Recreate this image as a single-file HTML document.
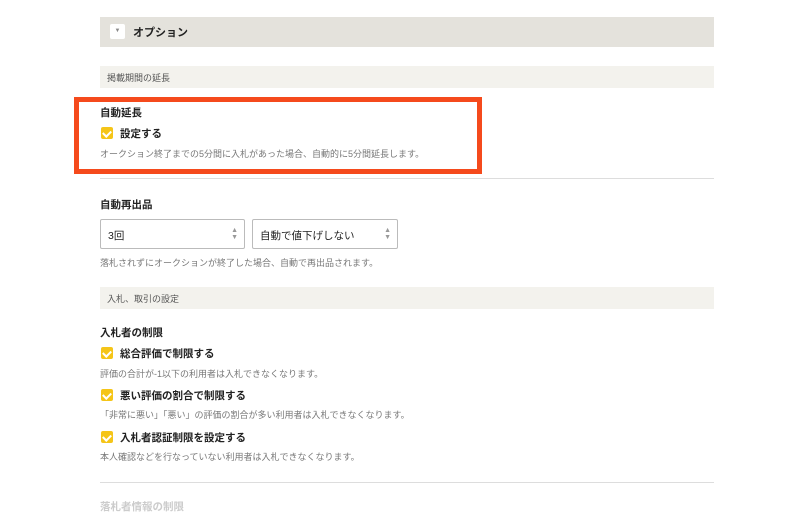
<!DOCTYPE html>
<html><head><meta charset="utf-8"><style>
*{margin:0;padding:0;box-sizing:border-box}
body{width:800px;height:503px;background:#fff;position:relative;overflow:hidden;font-family:"Liberation Sans","Noto Sans CJK JP",sans-serif;color:#333}
.a{position:absolute;white-space:nowrap}
.b{font-weight:bold;font-size:10.5px;color:#222}
.s{font-size:9px;color:#777}
.cb{position:absolute;width:12px;height:12px;background:#f5c518;border-radius:2px}
.cb:after{content:"";position:absolute;left:3px;top:1.5px;width:4px;height:6px;border:solid #fff;border-width:0 2px 2px 0;transform:rotate(45deg)}
.sel{position:absolute;top:219px;height:30px;border:1px solid #bbb;border-radius:2px;font-size:10.5px;padding:8px 0 0 7px;color:#222}
.ar{position:absolute;right:6px;top:7px;font-size:7px;line-height:7px;color:#999}
</style></head><body>
<div class="a" style="left:100px;top:17px;width:614px;height:30px;background:#e4e2dc"></div>
<div class="a" style="left:110px;top:24px;width:15px;height:15px;background:#fff;border-radius:2px;font-size:6px;color:#888;text-align:center;line-height:15px">▼</div>
<div class="a b" style="left:133px;top:24px;font-size:11px">オプション</div>
<div class="a" style="left:100px;top:66px;width:614px;height:22px;background:#f3f2ed"></div>
<div class="a s" style="left:107px;top:71px;color:#555">掲載期間の延長</div>
<div class="a" style="left:74px;top:97px;width:408px;height:77px;border:5px solid #f54a1c"></div>
<div class="a b" style="left:100px;top:105px">自動延長</div>
<div class="cb" style="left:101px;top:127px"></div>
<div class="a b" style="left:120px;top:126px">設定する</div>
<div class="a s" style="left:100px;top:147px">オークション終了までの5分間に入札があった場合、自動的に5分間延長します。</div>
<div class="a" style="left:100px;top:178px;width:614px;height:1px;background:#ddd"></div>
<div class="a b" style="left:100px;top:197px">自動再出品</div>
<div class="sel" style="left:100px;width:145px">3回<div class="ar">▲<br>▼</div></div>
<div class="sel" style="left:252px;width:146px">自動で値下げしない<div class="ar">▲<br>▼</div></div>
<div class="a s" style="left:100px;top:256px">落札されずにオークションが終了した場合、自動で再出品されます。</div>
<div class="a" style="left:100px;top:287px;width:614px;height:22px;background:#f3f2ed"></div>
<div class="a s" style="left:107px;top:292px;color:#555">入札、取引の設定</div>
<div class="a b" style="left:100px;top:325px">入札者の制限</div>
<div class="cb" style="left:101px;top:347px"></div>
<div class="a b" style="left:120px;top:346px">総合評価で制限する</div>
<div class="a s" style="left:100px;top:367px">評価の合計が-1以下の利用者は入札できなくなります。</div>
<div class="cb" style="left:101px;top:389px"></div>
<div class="a b" style="left:120px;top:388px">悪い評価の割合で制限する</div>
<div class="a s" style="left:100px;top:408px">「非常に悪い」「悪い」の評価の割合が多い利用者は入札できなくなります。</div>
<div class="cb" style="left:101px;top:431px"></div>
<div class="a b" style="left:120px;top:430px">入札者認証制限を設定する</div>
<div class="a s" style="left:100px;top:450px">本人確認などを行なっていない利用者は入札できなくなります。</div>
<div class="a" style="left:100px;top:482px;width:614px;height:1px;background:#ddd"></div>
<div class="a b" style="left:100px;top:499px;color:#ccc">落札者情報の制限</div>
</body></html>
